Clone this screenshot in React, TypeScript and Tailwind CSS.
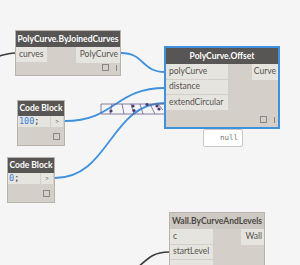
import React from "react";

type Port = { name: string };

const Node = ({
  title,
  left,
  top,
  width,
  height,
  inputs,
  outputs,
  inW,
  outW,
  selected,
  light,
}: {
  title: string;
  left: string;
  top: string;
  width: string;
  height: string;
  inputs: Port[];
  outputs: Port[];
  inW: string;
  outW: string;
  selected?: boolean;
  light?: boolean;
}) => {
  return (
    <div
      className={`absolute flex flex-col bg-[#d4d0c9] ${left} ${top} ${width} ${height} ${
        selected ? "outline outline-2 outline-[#3f91dd]" : "border border-[#b8b4ad]"
      }`}
    >
      <div
        className={`flex h-[16px] shrink-0 items-center justify-center whitespace-nowrap text-[8.5px] font-bold ${
          light ? "bg-[#cdc8c1] text-[#4a4845]" : "bg-[#585654] text-white"
        }`}
      >
        {title}
      </div>
      <div className="flex justify-between">
        <div className={`flex flex-col ${inW}`}>
          {inputs.map((p, i) => (
            <div
              key={i}
              className="flex h-[15.5px] items-center whitespace-nowrap border-b border-[#d4d0c9] bg-[#e6e4df] pl-[3px] text-[8.5px] text-[#55524e]"
            >
              {p.name}
            </div>
          ))}
        </div>
        <div className={`flex flex-col ${outW}`}>
          {outputs.map((p, i) => (
            <div
              key={i}
              className="flex h-[15.5px] items-center justify-end whitespace-nowrap bg-[#e6e4df] pr-[2px] text-[8.5px] text-[#55524e]"
            >
              {p.name}
            </div>
          ))}
        </div>
      </div>
      <div className="mt-auto flex items-center justify-end gap-[7px] pb-[4px] pr-[3px]">
        <div className="h-[7px] w-[7px] border border-[#8a8782]" />
        <div className="h-[6px] w-[1px] bg-[#8a8782]" />
      </div>
    </div>
  );
};

const CodeBlock = ({ left, top, code }: { left: string; top: string; code: string }) => (
  <div className={`absolute flex h-[46px] w-[48px] flex-col border border-[#b8b4ad] bg-[#d4d0c9] ${left} ${top}`}>
    <div className="flex h-[15px] shrink-0 items-center justify-center whitespace-nowrap bg-[#585654] text-[8.5px] font-bold text-white">
      Code Block
    </div>
    <div className="flex h-[11px] items-center">
      <div className="flex h-full w-[32px] items-center whitespace-nowrap bg-[#e6e4df] pl-[1px] font-['DejaVu_Sans_Mono',monospace] text-[8.5px] text-[#3a7fd8]">
        {code}
        <span className="text-[#333]">;</span>
      </div>
      <div className="ml-[1px] flex h-full w-[12px] items-center justify-center bg-[#e6e4df] text-[7px] text-[#666]">
        &gt;
      </div>
    </div>
    <div className="mt-auto flex justify-end pb-[5px] pr-[4px]">
      <div className="h-[7px] w-[7px] border border-[#8a8782]" />
    </div>
  </div>
);

export default function App() {
  return (
    <div className="relative h-[265px] w-[300px] overflow-hidden bg-[#f5f5f5] font-['Lato','Noto_Sans',sans-serif]">
      <svg className="absolute inset-0" width="300" height="265" viewBox="0 0 300 265">
        <path d="M-5 57 C 5 55, 8 53, 15 53" stroke="#3b3b3b" strokeWidth="1.6" fill="none" />
        <path d="M121 53 C 145 53, 141 72, 165 72" stroke="#3f91dd" strokeWidth="1.8" fill="none" />
        <path d="M65 121 C 115 121, 115 88, 165 88" stroke="#3f91dd" strokeWidth="1.8" fill="none" />
        <path d="M55 178 C 110 178, 110 103, 165 103" stroke="#3f91dd" strokeWidth="1.8" fill="none" />
        <path d="M135 270 C 150 256, 155 252, 169 252" stroke="#3b3b3b" strokeWidth="1.6" fill="none" />
        <g stroke="#6b5a8e" strokeWidth="0.8" fill="none">
          <path d="M101 104 L 165 104 M101 104 L 101 114 L 165 114" />
          <path d="M112 104 L 110 114 M122 104 L 124 114 M131 104 L 134 114 M140 104 L 143 114 M150 104 L 155 114 M158 104 L 163 110" />
        </g>
        <g fill="#4b3a70">
          <circle cx="111" cy="111" r="1.6" />
          <circle cx="133" cy="106" r="1.6" />
          <circle cx="134" cy="110.5" r="1.6" />
          <circle cx="147" cy="104.5" r="1.6" />
          <circle cx="157" cy="106" r="1.6" />
          <circle cx="159" cy="109" r="1.6" />
        </g>
      </svg>

      <Node
        title="PolyCurve.ByJoinedCurves"
        left="left-[15px]"
        top="top-[30px]"
        width="w-[106px]"
        height="h-[46px]"
        inputs={[{ name: "curves" }]}
        outputs={[{ name: "PolyCurve" }]}
        inW="w-[31px]"
        outW="w-[44px]"
      />

      <Node
        title="PolyCurve.Offset"
        left="left-[166px]"
        top="top-[48px]"
        width="w-[112px]"
        height="h-[79px]"
        inputs={[{ name: "polyCurve" }, { name: "distance" }, { name: "extendCircular" }]}
        outputs={[{ name: "Curve" }]}
        inW="w-[62px]"
        outW="w-[26px]"
        selected
      />

      <CodeBlock left="left-[17px]" top="top-[100px]" code="100" />
      <CodeBlock left="left-[7px]" top="top-[157px]" code="0" />

      <div className="absolute left-[203px] top-[129px] flex h-[18px] w-[40px] items-center justify-end rounded-[2px] border border-[#c8c8c8] bg-white pr-[4px] font-['DejaVu_Sans_Mono',monospace] text-[7.5px] text-[#777]">
        null
      </div>

      <Node
        title="Wall.ByCurveAndLevels"
        left="left-[169px]"
        top="top-[212px]"
        width="w-[96px]"
        height="h-[80px]"
        inputs={[{ name: "c" }, { name: "startLevel" }, { name: "" }]}
        outputs={[{ name: "Wall" }]}
        inW="w-[43px]"
        outW="w-[23px]"
        light
      />
    </div>
  );
}
